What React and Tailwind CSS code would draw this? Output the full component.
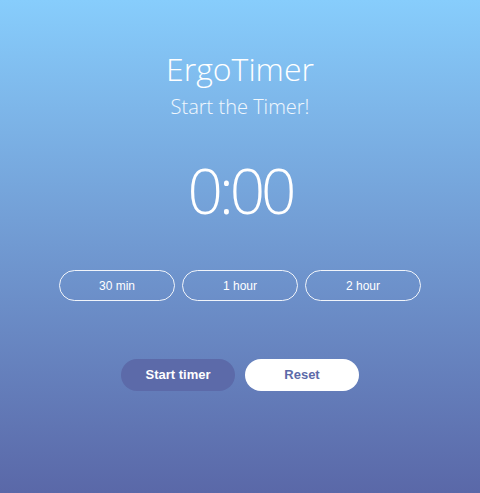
import React, { useState } from 'react'

export default function App() {
  const [seconds, setSeconds] = useState(0)
  const fmt = (s) => `${Math.floor(s / 60)}:${String(s % 60).padStart(2, '0')}`

  return (
    <div className="w-[480px] h-[493px] bg-gradient-to-b from-[#87cdfc] to-[#5a68a8] flex flex-col items-center text-white font-['Open_Sans',sans-serif]">
      <h1 className="mt-[47px] text-[32px] leading-[44px] font-light">ErgoTimer</h1>
      <p className="mt-[2px] text-[20px] leading-[28px] font-light text-white/90">Start the Timer!</p>

      <div className="mt-[38px] text-[62px] leading-[62px] font-light tracking-[-4px]">{fmt(seconds)}</div>

      <div className="mt-[49px] flex gap-[7px] font-['Liberation_Sans',sans-serif] text-[12px]">
        {[
          ['30 min', 1800],
          ['1 hour', 3600],
          ['2 hour', 7200],
        ].map(([label, value]) => (
          <button
            key={label}
            className="w-[116px] h-[31px] rounded-full border border-white/90 text-white"
            onClick={() => setSeconds(value)}
          >
            {label}
          </button>
        ))}
      </div>

      <div className="mt-[58px] flex gap-[10px] font-['Liberation_Sans',sans-serif] text-[13px] font-bold">
        <button className="w-[114px] h-[32px] rounded-full bg-[#5c6aa9] text-white">Start timer</button>
        <button
          className="w-[114px] h-[32px] rounded-full bg-white text-[#5c6aa9]"
          onClick={() => setSeconds(0)}
        >
          Reset
        </button>
      </div>
    </div>
  )
}
